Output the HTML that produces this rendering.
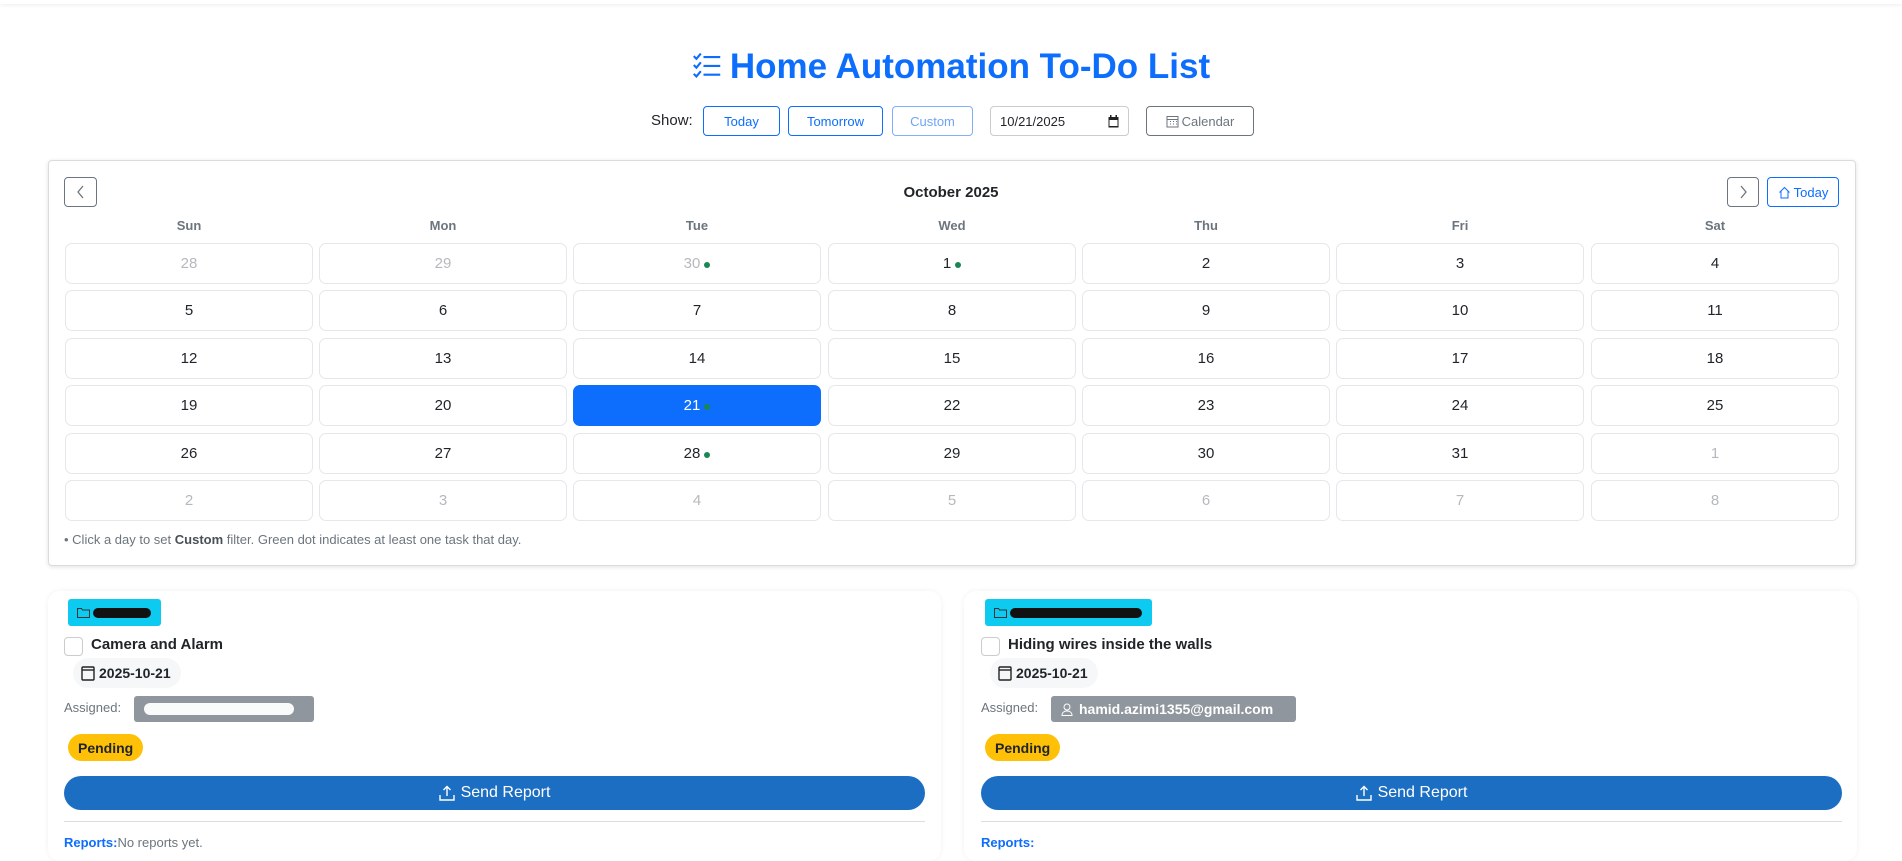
<!DOCTYPE html>
<html><head><meta charset="utf-8"><style>
*{box-sizing:border-box;margin:0;padding:0}
body{width:1902px;height:854px;overflow:hidden;background:#fff;font-family:"Liberation Sans",sans-serif;color:#212529;position:relative}
.topbar{position:absolute;left:0;top:0;width:1902px;height:4px;box-shadow:0 1px 4px rgba(0,0,0,.08)}
.abs{position:absolute}
h1{position:absolute;left:0;width:1902px;top:47px;text-align:center;font-size:35px;font-weight:bold;color:#0d6efd}
.btn{position:absolute;height:30px;border:1px solid #0d6efd;border-radius:4px;color:#0d6efd;font-size:13px;display:flex;align-items:center;justify-content:center;background:#fff}
.card{position:absolute;border:1px solid #dcdcdc;border-radius:4px;box-shadow:0 1px 4px rgba(0,0,0,.12);background:#fff}
.cell{position:absolute;width:248px;height:41px;border:1px solid #e5e7ea;border-radius:7px;display:flex;align-items:center;justify-content:center;font-size:15px;color:#212529}
.cell.m{color:#b5b9bd}
.dot{display:inline-block;width:6px;height:6px;border-radius:50%;background:#198754;margin-left:4px;margin-top:3px}
.dh{position:absolute;top:218px;width:248px;text-align:center;font-size:13px;font-weight:bold;color:#6c757d}
.task{position:absolute;top:591px;width:893px;height:270px;border-radius:12px;box-shadow:0 0 6px rgba(0,0,0,.06);background:#fff}
.tag{position:absolute;left:20px;top:8px;height:27px;background:#0dcaf0;border-radius:3px}
.blot{position:absolute;background:#111;border-radius:10px;height:10px}
.cb{position:absolute;left:16px;top:46px;width:19px;height:19px;border:1px solid #ccc;border-radius:4px}
.tt{position:absolute;left:43px;top:45px;font-size:15px;font-weight:bold}
.dp{position:absolute;left:25px;top:67px;height:30px;padding:0 10px 0 8px;border-radius:15px;background:#f6f7f8;font-size:14px;font-weight:bold;display:flex;align-items:center;gap:4px}
.as{position:absolute;left:16px;top:109px;font-size:13px;color:#6c757d}
.badge{position:absolute;left:86px;top:105px;height:26px;background:#8f969d;border-radius:3px;color:#fff;font-size:14px;font-weight:bold;display:flex;align-items:center;padding:0 10px}
.pend{position:absolute;left:20px;top:143px;height:27px;padding:0 10px;background:#ffc107;border-radius:14px;font-size:14px;font-weight:bold;display:flex;align-items:center}
.send{position:absolute;left:16px;top:185px;width:861px;height:34px;background:#1c6ec2;border-radius:17px;color:#fff;font-size:16px;display:flex;align-items:center;justify-content:center;gap:6px}
.hr{position:absolute;left:16px;top:230px;width:861px;height:1px;background:#ddd}
.rep{position:absolute;left:16px;top:244px;font-size:13px;color:#6c757d}
.rep b{color:#0d6efd}
</style></head><body>
<div class="topbar"></div>
<h1><svg width="30" height="28" viewBox="0 0 34 30" style="vertical-align:-1px;margin-right:8px" fill="none" stroke="#0d6efd" stroke-width="2.4"><path d="M2 5l3 3 5-6M2 15l3 3 5-6M2 25l3 3 5-6"/><path d="M13 6h19M13 16h19M13 26h19"/></svg>Home Automation To-Do List</h1>
<div class="abs" style="left:651px;top:112px;font-size:15px">Show:</div>
<div class="btn" style="left:703px;top:106px;width:77px">Today</div>
<div class="btn" style="left:788px;top:106px;width:95px">Tomorrow</div>
<div class="btn" style="left:892px;top:106px;width:81px;border-color:#7fb0f8;color:#6fa4f4">Custom</div>
<div class="btn" style="left:990px;top:106px;width:139px;border-color:#ccc;color:#212529;justify-content:space-between;padding:0 9px 0 9px;font-size:13px">10/21/2025<svg width="11" height="13" viewBox="0 0 11 13"><rect x="0.5" y="2" width="10" height="10.5" fill="#222"/><rect x="2" y="0" width="1.5" height="3" fill="#222"/><rect x="7.5" y="0" width="1.5" height="3" fill="#222"/><rect x="1.5" y="5" width="8" height="6" fill="#fff"/></svg></div>
<div class="btn" style="left:1146px;top:106px;width:108px;border-color:#6c757d;color:#6c757d;gap:3px"><svg width="13" height="13" viewBox="0 0 13 13" fill="none" stroke="#6c757d"><rect x="1" y="1.5" width="11" height="10.5"/><path d="M1 4.5h11M4 6.5h1M7 6.5h1M10 6.5h1M4 9h1M7 9h1M10 9h1"/></svg>Calendar</div>

<div class="card" style="left:48px;top:160px;width:1808px;height:406px"></div>
<div class="btn" style="left:64px;top:177px;width:33px;height:30px;border-color:#6c757d;color:#6c757d"><svg width="10" height="14" viewBox="0 0 10 14" fill="none" stroke="#6c757d" stroke-width="1.3"><path d="M7 1L2 7l5 6"/></svg></div>
<div class="abs" style="left:0;width:1902px;top:184px;text-align:center;font-size:15px;font-weight:bold">October 2025</div>
<div class="btn" style="left:1727px;top:177px;width:32px;height:30px;border-color:#6c757d"><svg width="10" height="14" viewBox="0 0 10 14" fill="none" stroke="#6c757d" stroke-width="1.3"><path d="M3 1l5 6-5 6"/></svg></div>
<div class="btn" style="left:1767px;top:177px;width:72px;height:30px;gap:3px;font-size:13px"><svg width="13" height="13" viewBox="0 0 13 13" fill="none" stroke="#0d6efd"><path d="M1.5 6.5L6.5 1.5l5 5M3 5v7h7V5"/></svg>Today</div>
<div class="dh" style="left:65px">Sun</div><div class="dh" style="left:319px">Mon</div><div class="dh" style="left:573px">Tue</div><div class="dh" style="left:828px">Wed</div><div class="dh" style="left:1082px">Thu</div><div class="dh" style="left:1336px">Fri</div><div class="dh" style="left:1591px">Sat</div>

<div class="cell m" style="left:65px;top:243px">28</div><div class="cell m" style="left:319px;top:243px">29</div><div class="cell m" style="left:573px;top:243px">30<span class="dot"></span></div><div class="cell" style="left:828px;top:243px">1<span class="dot"></span></div><div class="cell" style="left:1082px;top:243px">2</div><div class="cell" style="left:1336px;top:243px">3</div><div class="cell" style="left:1591px;top:243px">4</div>
<div class="cell" style="left:65px;top:290px">5</div><div class="cell" style="left:319px;top:290px">6</div><div class="cell" style="left:573px;top:290px">7</div><div class="cell" style="left:828px;top:290px">8</div><div class="cell" style="left:1082px;top:290px">9</div><div class="cell" style="left:1336px;top:290px">10</div><div class="cell" style="left:1591px;top:290px">11</div>
<div class="cell" style="left:65px;top:338px">12</div><div class="cell" style="left:319px;top:338px">13</div><div class="cell" style="left:573px;top:338px">14</div><div class="cell" style="left:828px;top:338px">15</div><div class="cell" style="left:1082px;top:338px">16</div><div class="cell" style="left:1336px;top:338px">17</div><div class="cell" style="left:1591px;top:338px">18</div>
<div class="cell" style="left:65px;top:385px">19</div><div class="cell" style="left:319px;top:385px">20</div><div class="cell" style="left:573px;top:385px;background:#0d6efd;border-color:#0d6efd;color:#fff">21<span class="dot"></span></div><div class="cell" style="left:828px;top:385px">22</div><div class="cell" style="left:1082px;top:385px">23</div><div class="cell" style="left:1336px;top:385px">24</div><div class="cell" style="left:1591px;top:385px">25</div>
<div class="cell" style="left:65px;top:433px">26</div><div class="cell" style="left:319px;top:433px">27</div><div class="cell" style="left:573px;top:433px">28<span class="dot"></span></div><div class="cell" style="left:828px;top:433px">29</div><div class="cell" style="left:1082px;top:433px">30</div><div class="cell" style="left:1336px;top:433px">31</div><div class="cell m" style="left:1591px;top:433px">1</div>
<div class="cell m" style="left:65px;top:480px">2</div><div class="cell m" style="left:319px;top:480px">3</div><div class="cell m" style="left:573px;top:480px">4</div><div class="cell m" style="left:828px;top:480px">5</div><div class="cell m" style="left:1082px;top:480px">6</div><div class="cell m" style="left:1336px;top:480px">7</div><div class="cell m" style="left:1591px;top:480px">8</div>
<div class="abs" style="left:64px;top:532px;font-size:13px;color:#6c757d">• Click a day to set <b style="color:#495057">Custom</b> filter. Green dot indicates at least one task that day.</div>

<div class="task" style="left:48px">
 <div class="tag" style="width:93px"><svg class="abs" style="left:9px;top:8px" width="13" height="11" viewBox="0 0 13 11" fill="none" stroke="#333"><path d="M.5 1.5h4l1 1.5h7v7.5H.5z"/></svg><div class="blot" style="left:25px;top:9px;width:58px"></div></div>
 <div class="cb"></div><div class="tt">Camera and Alarm</div>
 <div class="dp"><svg width="14" height="16" viewBox="0 0 14 16" fill="none" stroke="#222" stroke-width="1.4"><rect x="1" y="2" width="12" height="13" rx="1"/><path d="M1 5h12"/></svg>2025-10-21</div>
 <div class="as">Assigned:</div>
 <div class="badge" style="width:180px"><div style="width:150px;height:12px;background:#fff;border-radius:6px;opacity:.95"></div></div>
 <div class="pend">Pending</div>
 <div class="send"><svg width="16" height="16" viewBox="0 0 16 16" fill="none" stroke="#fff" stroke-width="1.4"><path d="M8 11V1.5M4.5 5L8 1.5 11.5 5M1 10v5h14v-5"/></svg>Send Report</div>
 <div class="hr"></div>
 <div class="rep"><b>Reports:</b>No reports yet.</div>
</div>
<div class="task" style="left:964px">
 <div class="tag" style="left:21px;width:167px"><svg class="abs" style="left:9px;top:8px" width="13" height="11" viewBox="0 0 13 11" fill="none" stroke="#333"><path d="M.5 1.5h4l1 1.5h7v7.5H.5z"/></svg><div class="blot" style="left:25px;top:9px;width:132px"></div></div>
 <div class="cb" style="left:17px"></div><div class="tt" style="left:44px">Hiding wires inside the walls</div>
 <div class="dp" style="left:26px"><svg width="14" height="16" viewBox="0 0 14 16" fill="none" stroke="#222" stroke-width="1.4"><rect x="1" y="2" width="12" height="13" rx="1"/><path d="M1 5h12"/></svg>2025-10-21</div>
 <div class="as" style="left:17px">Assigned:</div>
 <div class="badge" style="left:87px;width:245px;gap:6px"><svg width="12" height="13" viewBox="0 0 12 13" fill="none" stroke="#fff"><circle cx="6" cy="4" r="3"/><path d="M1 12.5c0-3 2.2-4.5 5-4.5s5 1.5 5 4.5z"/></svg>hamid.azimi1355@gmail.com</div>
 <div class="pend" style="left:21px">Pending</div>
 <div class="send" style="left:17px"><svg width="16" height="16" viewBox="0 0 16 16" fill="none" stroke="#fff" stroke-width="1.4"><path d="M8 11V1.5M4.5 5L8 1.5 11.5 5M1 10v5h14v-5"/></svg>Send Report</div>
 <div class="hr" style="left:17px"></div>
 <div class="rep" style="left:17px"><b>Reports:</b></div>
</div>
</body></html>
